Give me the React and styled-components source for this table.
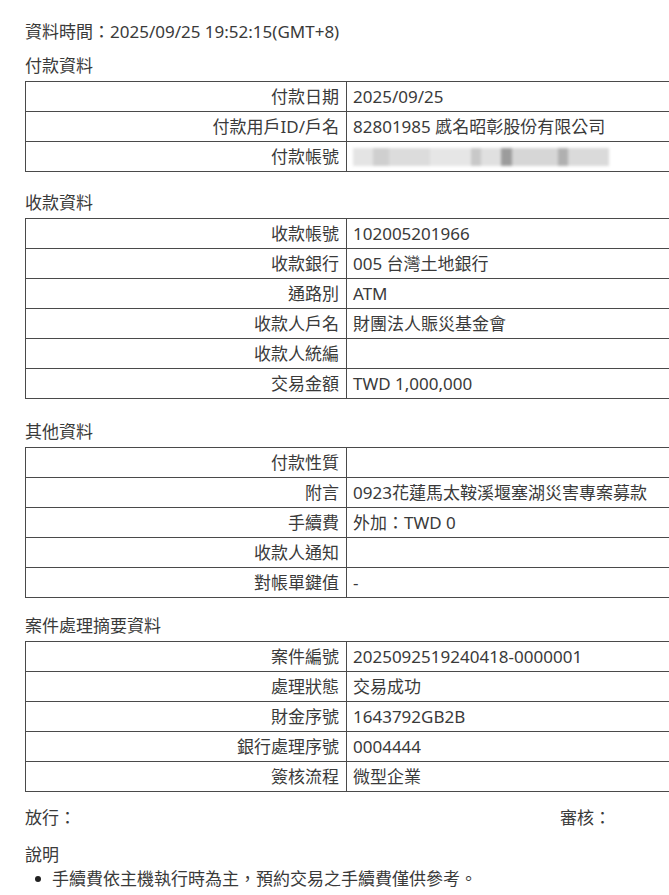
import React from "react";
import styled, { createGlobalStyle } from "styled-components";

const Global = createGlobalStyle`
  html, body { margin: 0; padding: 0; background: #fff; }
  body {
    font-family: "Noto Sans", "Noto Sans CJK TC", sans-serif;
    color: #3a3a3a;
    overflow: hidden;
  }
`;

const Page = styled.div`
  width: 669px;
  height: 895px;
  overflow: hidden;
  box-sizing: border-box;
  padding: 21px 0 0 25px;
  font-size: 17px;
  line-height: 22px;
`;

const Stamp = styled.div`
  margin-bottom: 12px;
`;

const SectionTitle = styled.div`
  margin-top: ${(p) => p.$gap}px;
  margin-bottom: 4px;
`;

const Table = styled.div`
  display: grid;
  grid-template-columns: 321px 1fr;
  width: 700px;
  border: 1.5px solid #4a4a4a;
  border-bottom-width: 0;
`;

const Cell = styled.div`
  height: 30px;
  box-sizing: border-box;
  border-bottom: 1.5px solid #4a4a4a;
  display: flex;
  align-items: center;
  white-space: nowrap;
  ${(p) =>
    p.$label
      ? `justify-content: flex-end; padding-right: 7px; border-right: 1.5px solid #4a4a4a;`
      : `padding-left: 6px;`}
`;

const Redacted = styled.div`
  width: 256px;
  height: 18px;
  filter: blur(1.5px);
  background: linear-gradient(
    90deg,
    #e4e4e4 0 8%,
    #cfcfcf 8% 14%,
    #dcdcdc 14% 30%,
    #e6e6e6 30% 46%,
    #c8c8c8 46% 50%,
    #e0e0e0 50% 58%,
    #9c9c9c 58% 62%,
    #d6d6d6 62% 80%,
    #b0b0b0 80% 84%,
    #dadada 84% 100%
  );
`;

const SignRow = styled.div`
  display: grid;
  grid-template-columns: 535px auto;
  margin-top: 15px;
`;

const NoteTitle = styled.div`
  margin-top: 15px;
`;

const NoteList = styled.ul`
  margin: 2px 0 0;
  padding: 0 0 0 27px;
  list-style: none;
`;

const NoteItem = styled.li`
  position: relative;
  &::before {
    content: "";
    position: absolute;
    left: -17px;
    top: 8px;
    width: 6px;
    height: 6px;
    border-radius: 50%;
    background: #222;
  }
`;

const sections = [
  {
    title: "付款資料",
    gap: 0,
    rows: [
      ["付款日期", "2025/09/25"],
      ["付款用戶ID/戶名", "82801985 慼名昭彰股份有限公司"],
      ["付款帳號", "__REDACTED__"],
    ],
  },
  {
    title: "收款資料",
    gap: 20,
    rows: [
      ["收款帳號", "102005201966"],
      ["收款銀行", "005 台灣土地銀行"],
      ["通路別", "ATM"],
      ["收款人戶名", "財團法人賑災基金會"],
      ["收款人統編", ""],
      ["交易金額", "TWD 1,000,000"],
    ],
  },
  {
    title: "其他資料",
    gap: 22,
    rows: [
      ["付款性質", ""],
      ["附言", "0923花蓮馬太鞍溪堰塞湖災害專案募款"],
      ["手續費", "外加：TWD 0"],
      ["收款人通知", ""],
      ["對帳單鍵值", "-"],
    ],
  },
  {
    title: "案件處理摘要資料",
    gap: 17,
    rows: [
      ["案件編號", "2025092519240418-0000001"],
      ["處理狀態", "交易成功"],
      ["財金序號", "1643792GB2B"],
      ["銀行處理序號", "0004444"],
      ["簽核流程", "微型企業"],
    ],
  },
];

export default function App() {
  return (
    <>
      <Global />
      <Page>
        <Stamp>資料時間：2025/09/25 19:52:15(GMT+8)</Stamp>
        {sections.map((s) => (
          <React.Fragment key={s.title}>
            <SectionTitle $gap={s.gap}>{s.title}</SectionTitle>
            <Table>
              {s.rows.map(([k, v]) => (
                <React.Fragment key={k}>
                  <Cell $label>{k}</Cell>
                  <Cell>{v === "__REDACTED__" ? <Redacted /> : v}</Cell>
                </React.Fragment>
              ))}
            </Table>
          </React.Fragment>
        ))}
        <SignRow>
          <span>放行：</span>
          <span>審核：</span>
        </SignRow>
        <NoteTitle>說明</NoteTitle>
        <NoteList>
          <NoteItem>手續費依主機執行時為主，預約交易之手續費僅供參考。</NoteItem>
        </NoteList>
      </Page>
    </>
  );
}
